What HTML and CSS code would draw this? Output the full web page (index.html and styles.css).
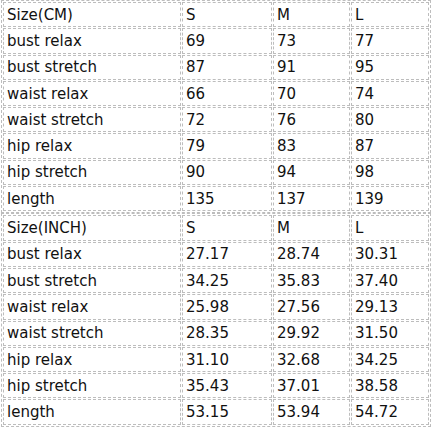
FILE: index.html
```html
<!DOCTYPE html>
<html>
<head>
<meta charset="utf-8">
<link rel="stylesheet" href="styles.css">
</head>
<body>
<table class="size-table">
<colgroup>
<col class="c-name"><col class="c-s"><col class="c-m"><col class="c-l">
</colgroup>
<tbody>
<tr><td>Size(CM)</td><td>S</td><td>M</td><td>L</td></tr>
<tr><td>bust relax</td><td>69</td><td>73</td><td>77</td></tr>
<tr><td>bust stretch</td><td>87</td><td>91</td><td>95</td></tr>
<tr><td>waist relax</td><td>66</td><td>70</td><td>74</td></tr>
<tr><td>waist stretch</td><td>72</td><td>76</td><td>80</td></tr>
<tr><td>hip relax</td><td>79</td><td>83</td><td>87</td></tr>
<tr><td>hip stretch</td><td>90</td><td>94</td><td>98</td></tr>
<tr><td>length</td><td>135</td><td>137</td><td>139</td></tr>
</tbody>
</table>
<table class="size-table">
<colgroup>
<col class="c-name"><col class="c-s"><col class="c-m"><col class="c-l">
</colgroup>
<tbody>
<tr><td>Size(INCH)</td><td>S</td><td>M</td><td>L</td></tr>
<tr><td>bust relax</td><td>27.17</td><td>28.74</td><td>30.31</td></tr>
<tr><td>bust stretch</td><td>34.25</td><td>35.83</td><td>37.40</td></tr>
<tr><td>waist relax</td><td>25.98</td><td>27.56</td><td>29.13</td></tr>
<tr><td>waist stretch</td><td>28.35</td><td>29.92</td><td>31.50</td></tr>
<tr><td>hip relax</td><td>31.10</td><td>32.68</td><td>34.25</td></tr>
<tr><td>hip stretch</td><td>35.43</td><td>37.01</td><td>38.58</td></tr>
<tr><td>length</td><td>53.15</td><td>53.94</td><td>54.72</td></tr>
</tbody>
</table>
</body>
</html>
```
FILE: styles.css
```css
html, body {
  margin: 0;
  padding: 0;
  background: #fff;
}
.size-table {
  margin: 0 1px;
  width: 430px;
  table-layout: fixed;
  border: 1px dashed #bdbdbd;
  border-collapse: separate;
  border-spacing: 1px;
  font-family: "DejaVu Sans", Verdana, sans-serif;
  font-size: 15px;
  color: #111;
}
.c-name { width: 178px; }
.c-s { width: 90px; }
.c-m { width: 77px; }
.c-l { width: 78px; }
.size-table td {
  box-sizing: border-box;
  height: 25.3px;
  padding: 0 3px;
  border: 1px dashed #bdbdbd;
  vertical-align: middle;
  white-space: nowrap;
  line-height: 18px;
}
```
